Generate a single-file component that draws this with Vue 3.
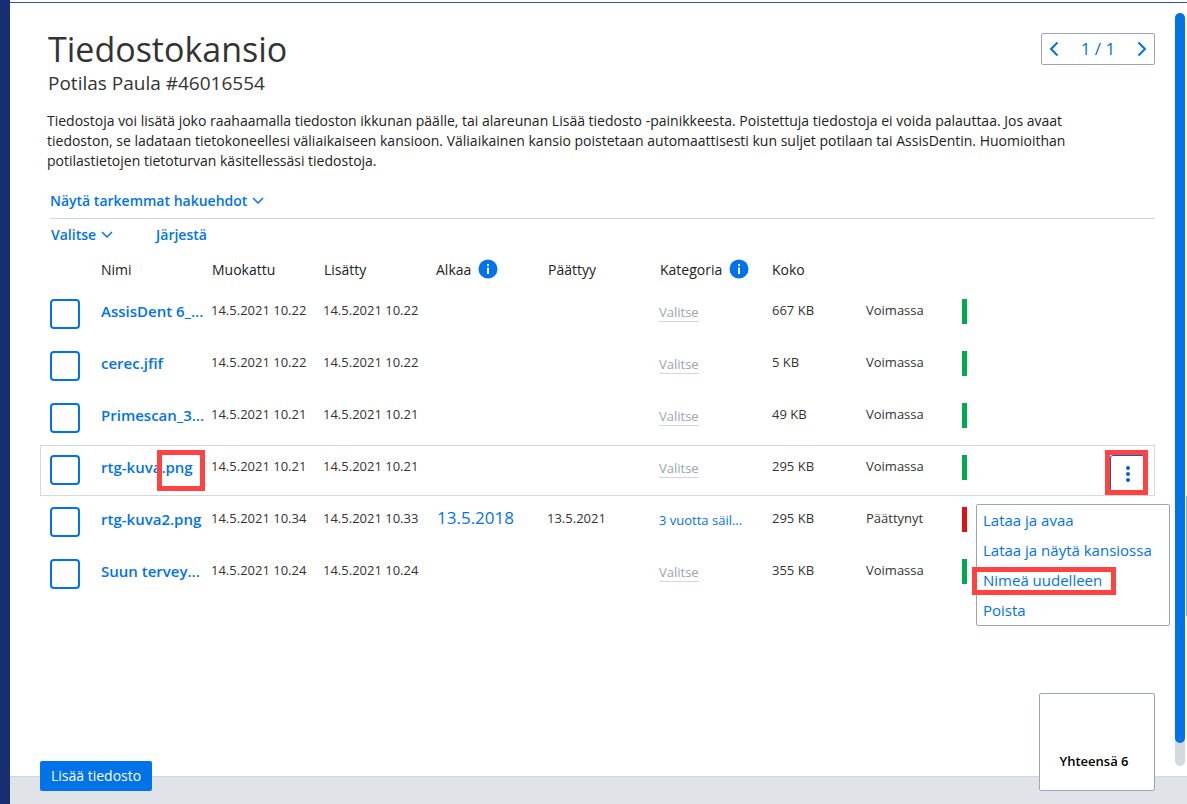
<script setup>
import { ref } from 'vue'

const page = ref(1)
const pages = ref(1)

const files = ref([
  { id: 1, name: 'AssisDent 6_...', modified: '14.5.2021 10.22', added: '14.5.2021 10.22', size: '667 KB', status: 'Voimassa', valid: true },
  { id: 2, name: 'cerec.jfif', modified: '14.5.2021 10.22', added: '14.5.2021 10.22', size: '5 KB', status: 'Voimassa', valid: true },
  { id: 3, name: 'Primescan_3...', modified: '14.5.2021 10.21', added: '14.5.2021 10.21', size: '49 KB', status: 'Voimassa', valid: true },
  { id: 4, name: 'rtg-kuva.png', modified: '14.5.2021 10.21', added: '14.5.2021 10.21', size: '295 KB', status: 'Voimassa', valid: true, active: true },
  { id: 5, name: 'rtg-kuva2.png', modified: '14.5.2021 10.34', added: '14.5.2021 10.33', starts: '13.5.2018', ends: '13.5.2021', category: '3 vuotta säil...', size: '295 KB', status: 'Päättynyt', valid: false },
  { id: 6, name: 'Suun tervey...', modified: '14.5.2021 10.24', added: '14.5.2021 10.24', size: '355 KB', status: 'Voimassa', valid: true }
])

const actions = [
  { label: 'Lataa ja avaa' },
  { label: 'Lataa ja näytä kansiossa' },
  { label: 'Nimeä uudelleen', marked: true },
  { label: 'Poista' }
]
</script>

<template>
  <div class="app">
    <div class="rail"></div>
    <div class="window">
      <div class="body">
        <main class="content">
          <header class="head">
            <div>
              <h1>Tiedostokansio</h1>
              <p class="patient">Potilas Paula #46016554</p>
            </div>
            <nav class="pager" aria-label="Sivut">
              <button type="button" aria-label="Edellinen">
                <svg width="10" height="16" viewBox="0 0 10 16"><path d="M8.500 1.500 2 8l6.500 6.500" /></svg>
              </button>
              <span>{{ page }} / {{ pages }}</span>
              <button type="button" aria-label="Seuraava">
                <svg width="10" height="16" viewBox="0 0 10 16"><path d="M1.500 1.500 8 8l-6.500 6.500" /></svg>
              </button>
            </nav>
          </header>

          <p class="intro">
            Tiedostoja voi lisätä joko raahaamalla tiedoston ikkunan päälle, tai alareunan Lisää tiedosto -painikkeesta. Poistettuja tiedostoja ei voida palauttaa. Jos avaat tiedoston, se ladataan tietokoneellesi väliaikaiseen kansioon. Väliaikainen kansio poistetaan automaattisesti kun suljet potilaan tai AssisDentin. Huomioithan potilastietojen tietoturvan käsitellessäsi tiedostoja.
          </p>

          <div class="filters">
            <button type="button" class="text-button">
              Näytä tarkemmat hakuehdot
              <svg width="12" height="8" viewBox="0 0 12 8"><path d="M1 1l5 5 5-5" /></svg>
            </button>
          </div>
          <div class="tools">
            <button type="button" class="text-button">
              Valitse
              <svg width="12" height="8" viewBox="0 0 12 8"><path d="M1 1l5 5 5-5" /></svg>
            </button>
            <button type="button" class="text-button">Järjestä</button>
          </div>

          <table>
            <colgroup>
              <col class="c-check" />
              <col class="c-name" />
              <col class="c-std" />
              <col class="c-std" />
              <col class="c-std" />
              <col class="c-std" />
              <col class="c-std" />
              <col class="c-size" />
              <col class="c-status" />
              <col />
            </colgroup>
            <thead>
              <tr>
                <th></th>
                <th>Nimi</th>
                <th>Muokattu</th>
                <th>Lisätty</th>
                <th>
                  <span class="with-info">Alkaa
                    <svg class="info" width="20" height="20" viewBox="0 0 20 20"><circle cx="10" cy="9" r="9.500" /><path d="M9 4h2v2H9zM9 7.500h2V14H9z" /></svg>
                  </span>
                </th>
                <th>Päättyy</th>
                <th>
                  <span class="with-info">Kategoria
                    <svg class="info" width="20" height="20" viewBox="0 0 20 20"><circle cx="10" cy="9" r="9.500" /><path d="M9 4h2v2H9zM9 7.500h2V14H9z" /></svg>
                  </span>
                </th>
                <th>Koko</th>
                <th></th>
                <th></th>
              </tr>
            </thead>
            <tbody>
              <tr v-for="f in files" :key="f.id">
                <td class="check">
                  <input type="checkbox" :aria-label="f.name" />
                  <span v-if="f.active" class="frame"></span>
                </td>
                <td class="name">
                  <a href="#">{{ f.name }}</a>
                  <span v-if="f.active" class="mark mark-ext"></span>
                </td>
                <td>{{ f.modified }}</td>
                <td>{{ f.added }}</td>
                <td class="starts"><a v-if="f.starts" href="#">{{ f.starts }}</a></td>
                <td>{{ f.ends }}</td>
                <td class="category">
                  <a v-if="f.category" href="#">{{ f.category }}</a>
                  <button v-else type="button">Valitse</button>
                </td>
                <td class="inset">{{ f.size }}</td>
                <td class="inset">{{ f.status }}</td>
                <td>
                  <span class="bar" :class="{ expired: !f.valid }"></span>
                  <template v-if="f.active">
                    <button type="button" class="kebab" aria-label="Toiminnot">
                      <svg width="6" height="18" viewBox="0 0 6 18"><circle cx="3" cy="3" r="2" /><circle cx="3" cy="9" r="2" /><circle cx="3" cy="15" r="2" /></svg>
                      <span class="mark mark-kebab"></span>
                    </button>
                    <ul class="menu">
                      <li v-for="a in actions" :key="a.label">
                        <button type="button">{{ a.label }}</button>
                        <span v-if="a.marked" class="mark mark-item"></span>
                      </li>
                    </ul>
                  </template>
                </td>
              </tr>
            </tbody>
          </table>
        </main>
        <div class="scroll"><div class="thumb"></div></div>
      </div>
      <footer class="foot">
        <div class="foot-items">
          <button type="button" class="add">Lisää tiedosto</button>
          <div class="total">Yhteensä {{ files.length }}</div>
        </div>
      </footer>
      <span class="edge"></span>
    </div>
  </div>
</template>

<style>
body {
  margin: 0;
}
</style>

<style scoped>
.app {
  display: flex;
  min-height: 100vh;
  background: #fff;
  color: #333;
  font: 14px/20px "Open Sans", "Noto Sans", sans-serif;
}
.app * {
  box-sizing: border-box;
}
button {
  padding: 0;
  border: 0;
  background: none;
  color: inherit;
  font: inherit;
  cursor: pointer;
}
a {
  color: #0073e9;
  text-decoration: none;
}
svg {
  display: block;
  fill: none;
  stroke: currentColor;
}
.rail {
  flex: none;
  width: 10px;
  background: #182e72;
}
.window {
  position: relative;
  display: flex;
  flex: 1;
  flex-direction: column;
  min-width: 0;
  margin-top: 2px;
  border-top: 1px solid #36509c;
}
.body {
  display: flex;
  flex: 1;
  gap: 20px;
  padding: 10px 2px 10px 30px;
}
.content {
  flex: 1;
  min-width: 0;
}
.head {
  display: flex;
  align-items: flex-start;
  justify-content: space-between;
  padding: 12px 0 0 8px;
}
h1 {
  margin: 0;
  font-size: 34px;
  font-weight: 400;
  line-height: 48px;
}
.patient {
  margin: 0;
  font-size: 19px;
  line-height: 20px;
}
.pager {
  display: flex;
  align-items: center;
  justify-content: space-between;
  width: 114px;
  height: 32px;
  margin-top: 8px;
  padding: 0 7px;
  border: 1px solid #9aa5b1;
  border-radius: 2px;
  color: #0073e9;
  font-size: 17px;
}
.pager svg {
  stroke-width: 2;
}
.intro {
  margin: 18px 76px 0 7px;
  color: #222;
}
.filters {
  margin-left: 10px;
  padding: 20px 0 7px;
  border-bottom: 1px solid #cfd7de;
}
.text-button {
  display: flex;
  align-items: center;
  gap: 5px;
  color: #0073e9;
  font-weight: 600;
}
.text-button svg {
  stroke-width: 1.5;
}
.tools {
  display: flex;
  gap: 43px;
  padding: 6px 0 0 11px;
}
table {
  width: 100%;
  margin-top: 15px;
  border-spacing: 0;
  table-layout: fixed;
}
.c-check {
  width: 60px;
}
.c-name {
  width: 111px;
}
.c-std {
  width: 112px;
}
.c-size {
  width: 94px;
}
.c-status {
  width: 96px;
}
th {
  height: 29px;
  padding: 0 1px;
  color: #222;
  font-weight: 400;
  text-align: left;
  vertical-align: top;
  white-space: nowrap;
}
.with-info {
  display: flex;
  gap: 7px;
}
.info {
  overflow: visible;
}
.info circle {
  fill: #0073e9;
  stroke: none;
}
.info path {
  fill: #fff;
  stroke: none;
}
tbody tr {
  position: relative;
}
td {
  height: 52px;
  padding: 11px 0 0;
  font-size: 13px;
  vertical-align: top;
  white-space: nowrap;
}
.frame {
  position: absolute;
  inset: 0 0 1px;
  border: 1px solid #d2d8de;
  pointer-events: none;
}
.check {
  padding: 10px 0 0 10px;
}
.check input {
  display: block;
  appearance: none;
  width: 30px;
  height: 30px;
  margin: 0;
  border: 2px solid #0073e9;
  border-radius: 4px;
  background: #fff;
}
.name {
  position: relative;
  padding: 12px 0 0 1px;
  font-size: 15px;
  font-weight: 600;
}
.starts {
  padding-left: 2px;
  font-size: 17px;
}
.category {
  padding-top: 13px;
}
.category button {
  border-bottom: 1px solid #cfd7de;
  color: #9aa5b1;
  line-height: 17px;
}
.inset {
  padding-left: 1px;
}
.bar {
  display: block;
  width: 5px;
  height: 25px;
  margin-left: 1px;
  margin-top: -1px;
  background: #00a94f;
}
.bar.expired {
  background: #df1118;
}
.kebab {
  position: absolute;
  top: 10px;
  right: 10px;
  display: flex;
  align-items: center;
  justify-content: center;
  width: 35px;
  height: 37px;
  border: 1px solid #0061c3;
  border-radius: 3px;
  color: #0061c3;
}
.kebab svg {
  fill: currentColor;
  stroke: none;
}
.menu {
  position: absolute;
  top: 59px;
  right: -15px;
  z-index: 2;
  width: 194px;
  margin: 0;
  padding: 0;
  border: 1px solid #9aa5b1;
  border-radius: 2px;
  background: #fff;
  list-style: none;
}
.menu li {
  position: relative;
  height: 30px;
}
.menu button {
  width: 100%;
  height: 30px;
  padding-left: 6px;
  color: #0073e9;
  font-size: 15px;
  text-align: left;
}
.mark {
  position: absolute;
  border: 5px solid #ff4343;
  pointer-events: none;
}
.mark-ext {
  top: 5px;
  left: 57px;
  width: 48px;
  height: 41px;
}
.mark-kebab {
  inset: -6px -4px -4px -6px;
}
.mark-item {
  top: 2px;
  left: -5px;
  width: 144px;
  height: 28px;
}
.scroll {
  flex: none;
  width: 10px;
  border-radius: 5px;
  background: #d2dae0;
}
.thumb {
  height: 97%;
  border-radius: 5px;
  background: #0073e9;
}
.foot {
  position: relative;
  flex: none;
  height: 28px;
  border-top: 1px solid #cfd7de;
  background: #e0e4e8;
}
.foot-items {
  position: absolute;
  right: 32px;
  bottom: 13px;
  left: 30px;
  display: flex;
  align-items: flex-end;
  justify-content: space-between;
}
.add {
  height: 30px;
  padding: 0 11px;
  border-radius: 2px;
  background: #0073e9;
  color: #fff;
}
.total {
  display: flex;
  align-items: flex-end;
  justify-content: center;
  width: 116px;
  height: 98px;
  padding-bottom: 19px;
  padding-right: 6px;
  border: 1px solid #9aa5b1;
  border-radius: 2px;
  background: #fff;
  color: #000;
  font-size: 13px;
  font-weight: 600;
}
.edge {
  position: absolute;
  top: 493px;
  right: 0;
  width: 1px;
  height: 120px;
  background: #9aa5b1;
}
</style>
